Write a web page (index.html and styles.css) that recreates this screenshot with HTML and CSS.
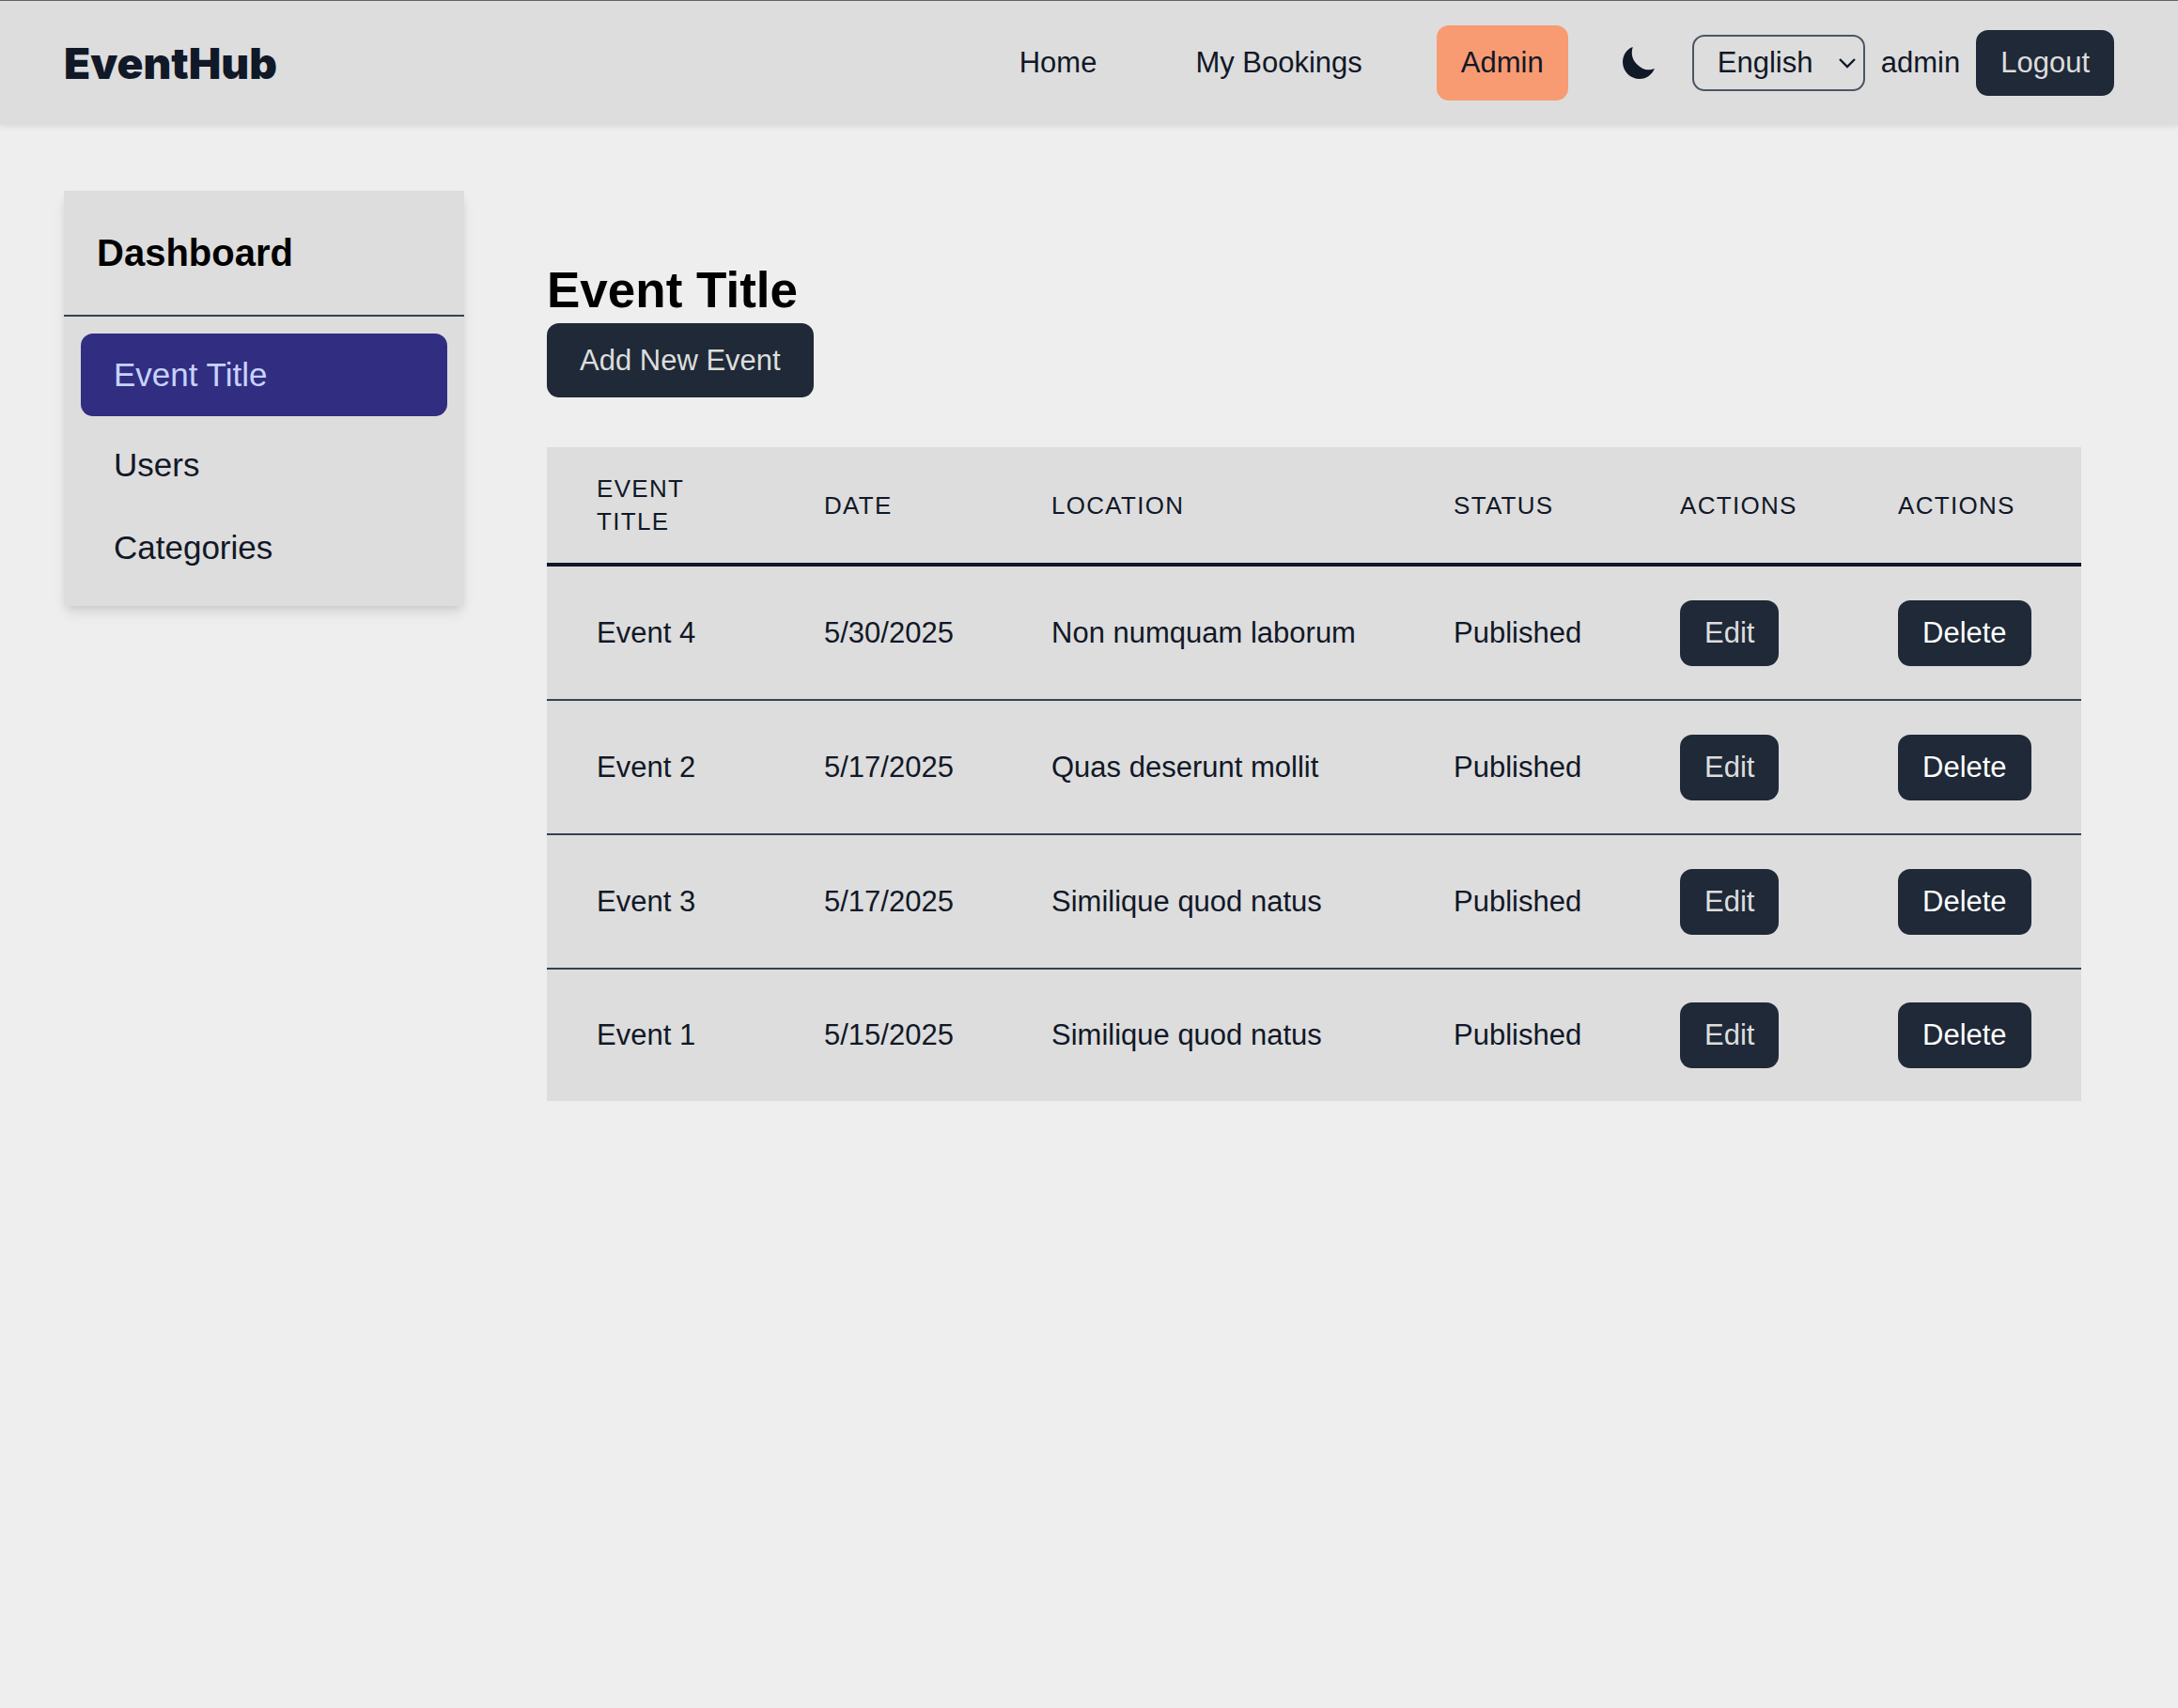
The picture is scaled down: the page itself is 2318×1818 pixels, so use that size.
FILE: index.html
```html
<!DOCTYPE html>
<html lang="en">
<head>
  <meta charset="utf-8">
  <meta name="viewport" content="width=device-width, initial-scale=1">
  <title>EventHub</title>
  <link rel="stylesheet" href="styles.css">
</head>
<body>
  <header class="site-header">
    <a class="logo" href="#">EventHub</a>
    <div class="header-right">
      <nav class="main-nav">
        <a class="nav-link" href="#">Home</a>
        <a class="nav-link" href="#">My Bookings</a>
        <a class="nav-link nav-link-active" href="#">Admin</a>
      </nav>
      <div class="user-tools">
        <button class="theme-toggle" type="button" aria-label="Toggle theme">
          <svg class="moon-icon" viewBox="0 0 34 34" aria-hidden="true"><path d="M10.7 0C8.5 8 10.5 14 15.5 18.7C20.5 23.7 26 26 34 23C31 29.5 25.5 34 18 34C8 34 0 26 0 16C0 9 4 2.5 10.7 0Z"/></svg>
        </button>
        <div class="select-wrap">
          <select class="language" aria-label="Language">
            <option>English</option>
          </select>
          <svg class="chevron" viewBox="0 0 20 12" aria-hidden="true"><path d="M2 2L10 10L18 2"/></svg>
        </div>
        <span class="username">admin</span>
        <button class="btn btn-muted" type="button">Logout</button>
      </div>
    </div>
  </header>

  <div class="layout">
    <aside class="sidebar">
      <h2 class="sidebar-title">Dashboard</h2>
      <nav class="sidebar-nav">
        <a class="side-link side-link-active" href="#">Event Title</a>
        <a class="side-link" href="#">Users</a>
        <a class="side-link" href="#">Categories</a>
      </nav>
    </aside>

    <main class="content">
      <h1 class="page-title">Event Title</h1>
      <button class="btn btn-muted btn-large" type="button">Add New Event</button>

      <table class="events">
        <colgroup>
          <col class="col-title">
          <col class="col-date">
          <col class="col-location">
          <col class="col-status">
          <col class="col-edit">
          <col class="col-delete">
        </colgroup>
        <thead>
          <tr><th scope="col">Event Title</th><th scope="col">Date</th><th scope="col">Location</th><th scope="col">Status</th><th scope="col">Actions</th><th scope="col">Actions</th></tr>
        </thead>
        <tbody>
          <tr><td>Event 4</td><td>5/30/2025</td><td>Non numquam laborum</td><td>Published</td><td><button class="btn btn-muted" type="button">Edit</button></td><td><button class="btn" type="button">Delete</button></td></tr>
          <tr><td>Event 2</td><td>5/17/2025</td><td>Quas deserunt mollit</td><td>Published</td><td><button class="btn btn-muted" type="button">Edit</button></td><td><button class="btn" type="button">Delete</button></td></tr>
          <tr><td>Event 3</td><td>5/17/2025</td><td>Similique quod natus</td><td>Published</td><td><button class="btn btn-muted" type="button">Edit</button></td><td><button class="btn" type="button">Delete</button></td></tr>
          <tr><td>Event 1</td><td>5/15/2025</td><td>Similique quod natus</td><td>Published</td><td><button class="btn btn-muted" type="button">Edit</button></td><td><button class="btn" type="button">Delete</button></td></tr>
        </tbody>
      </table>
    </main>
  </div>
</body>
</html>
```
FILE: styles.css
```css
*,
*::before,
*::after {
  box-sizing: border-box;
}

body {
  margin: 0;
  background: #eeeeee;
  color: #111827;
  font-family: "Liberation Sans", Arial, sans-serif;
  font-size: 31px;
  line-height: 44px;
}

a {
  color: inherit;
  text-decoration: none;
}

button,
select {
  font: inherit;
}

.site-header {
  display: flex;
  align-items: center;
  justify-content: space-between;
  padding: 26px 68px;
  border-top: 1px solid #646262;
  background: #dddddd;
  box-shadow: 0 2px 6px rgba(0, 0, 0, 0.08);
}

.logo {
  font-family: "Arial Black", Inter, sans-serif;
  font-size: 46px;
  font-weight: 900;
}

.header-right,
.main-nav,
.user-tools {
  display: flex;
  align-items: center;
}

.header-right {
  gap: 35px;
}

.main-nav {
  gap: 53px;
}

.nav-link {
  padding: 18px 26px;
  border-radius: 13px;
}

.nav-link-active {
  background: #f89b72;
}

.user-tools {
  gap: 17px;
}

.theme-toggle {
  display: flex;
  align-items: center;
  justify-content: center;
  width: 80px;
  height: 70px;
  padding: 0;
  border: 0;
  background: none;
  color: inherit;
}

.moon-icon {
  width: 34px;
  height: 34px;
  fill: currentColor;
}

.select-wrap {
  display: grid;
  align-items: center;
}

.select-wrap > * {
  grid-area: 1 / 1;
}

.language {
  appearance: none;
  width: 184px;
  height: 60px;
  padding: 0 25px;
  border: 2px solid #4b5563;
  border-radius: 13px;
  background: transparent;
  color: inherit;
}

.chevron {
  justify-self: end;
  width: 20px;
  height: 12px;
  margin-right: 9px;
  fill: none;
  stroke: currentColor;
  stroke-width: 2.4;
  pointer-events: none;
}

.btn {
  display: block;
  height: 70px;
  padding: 0 26px;
  border: 0;
  border-radius: 13px;
  background: #1f2937;
  color: #ffffff;
}

.btn-muted {
  color: #dddddd;
}

.btn-large {
  height: 79px;
  padding: 0 35px;
}

.layout {
  display: flex;
  align-items: flex-start;
  gap: 88px;
  padding: 70px 103px 70px 68px;
}

.sidebar {
  flex: 0 0 426px;
  background: #dddddd;
  box-shadow: 0 9px 13px -2px rgba(0, 0, 0, 0.1), 0 4px 9px -4px rgba(0, 0, 0, 0.1);
}

.sidebar-title {
  margin: 0;
  padding: 44px 35px;
  border-bottom: 2px solid #374151;
  color: #000000;
  font-size: 40px;
  font-weight: 700;
}

.sidebar-nav {
  padding: 18px;
}

.side-link {
  display: block;
  padding: 22px 35px;
  border-radius: 13px;
  font-size: 35px;
}

.side-link-active {
  margin-bottom: 8px;
  background: #312e81;
  color: #c7d2fe;
}

.content {
  flex: 1;
  min-width: 0;
  padding-top: 71px;
}

.page-title {
  margin: 0;
  color: #000000;
  font-size: 53px;
  font-weight: 700;
  line-height: 70px;
}

.events {
  width: 100%;
  margin-top: 53px;
  border-collapse: separate;
  border-spacing: 0;
  table-layout: fixed;
  background: #dddddd;
}

.col-title,
.col-date {
  width: 242px;
}

.col-status {
  width: 241px;
}

.col-edit {
  width: 232px;
}

.col-delete {
  width: 248px;
}

.events th {
  padding: 27px 53px 26px;
  border-bottom: 4px solid #111827;
  font-size: 26px;
  font-weight: 400;
  letter-spacing: 0.05em;
  line-height: 35px;
  text-align: left;
  text-transform: uppercase;
}

.events td {
  padding: 36px 53px 35px;
  border-bottom: 2px solid #374151;
  white-space: nowrap;
}

.events tbody tr:last-child td {
  padding-top: 35px;
  border-bottom: 0;
}
```
